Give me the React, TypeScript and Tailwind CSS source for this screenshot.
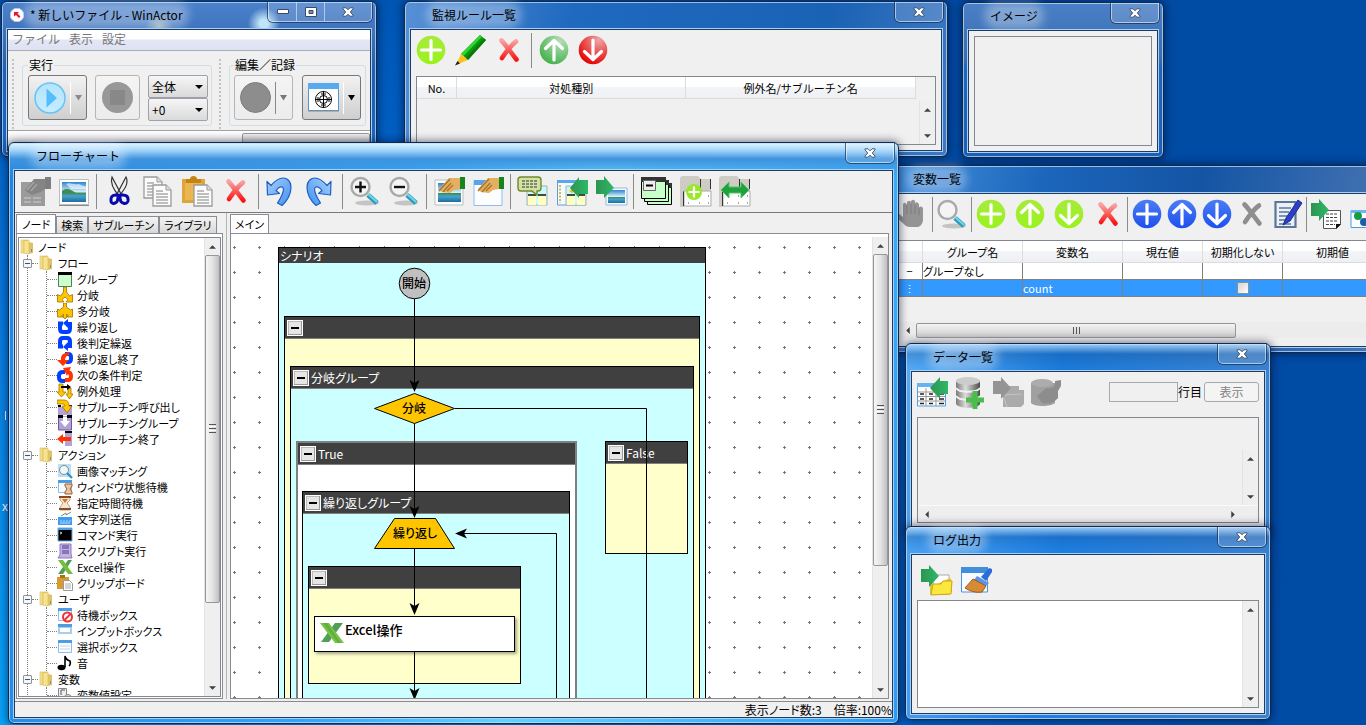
import React from 'react';
import clsx from 'clsx';

type Box = { children: React.ReactNode };

const Pic = ({ children }: Box) => (
  <svg width="30" height="30" viewBox="0 0 30 30" fill="none" aria-hidden="true">{children}</svg>
);

const Mini = ({ children }: Box) => (
  <svg width="16" height="16" viewBox="0 0 16 16" fill="none" className="shrink-0" aria-hidden="true">{children}</svg>
);

/* ---------- shared gradients ---------- */

const Gradients = () => (
  <svg className="absolute size-0" aria-hidden="true">
    <defs>
      <linearGradient id="gRed" x1="0" y1="0" x2="0" y2="1"><stop offset="0" stopColor="#f9a3a3" /><stop offset="1" stopColor="#fa1414" /></linearGradient>
      <radialGradient id="gGreen" cx=".7" cy=".2" r=".9"><stop offset="0" stopColor="#b5dfb8" /><stop offset="1" stopColor="#3fae46" /></radialGradient>
      <radialGradient id="gRedBall" cx=".7" cy=".15" r=".9"><stop offset="0" stopColor="#eda7a7" /><stop offset="1" stopColor="#e60000" /></radialGradient>
      <linearGradient id="gLime" x1="0" y1="0" x2="0" y2="1"><stop offset="0" stopColor="#a8ea3c" /><stop offset="1" stopColor="#98f31c" /></linearGradient>
      <linearGradient id="gBlue" x1="0" y1="0" x2="0" y2="1"><stop offset="0" stopColor="#4b7df5" /><stop offset="1" stopColor="#1d50ee" /></linearGradient>
      <linearGradient id="gArrow" x1="0" y1="0" x2="1" y2="0"><stop offset="0" stopColor="#2b9552" /><stop offset="1" stopColor="#2fb869" /></linearGradient>
      <linearGradient id="gSky" x1="0" y1="0" x2="0" y2="1"><stop offset="0" stopColor="#2d86d3" /><stop offset=".5" stopColor="#d8f0f5" /><stop offset=".55" stopColor="#3f8a62" /><stop offset=".7" stopColor="#48a4c4" /><stop offset="1" stopColor="#1b6ca8" /></linearGradient>
      <linearGradient id="gUndo" x1="0" y1="0" x2="1" y2="1"><stop offset="0" stopColor="#a8d0fb" /><stop offset="1" stopColor="#3f8ff0" /></linearGradient>
      <linearGradient id="gDb" x1="0" y1="0" x2="1" y2="0"><stop offset="0" stopColor="#7a7a7a" /><stop offset=".4" stopColor="#dcdcdc" /><stop offset="1" stopColor="#4c4c4c" /></linearGradient>
      <linearGradient id="gFolder" x1="0" y1="0" x2="1" y2="0"><stop offset="0" stopColor="#f8e596" /><stop offset="1" stopColor="#dcb852" /></linearGradient>
      <linearGradient id="gPlay" x1="0" y1="0" x2="0" y2="1"><stop offset="0" stopColor="#b4e4fb" /><stop offset="1" stopColor="#c6ecff" /></linearGradient>
      <pattern id="gridDots" x="1" y="12" width="25" height="25" patternUnits="userSpaceOnUse"><path d="M1 1h3v1H1zM2 0h1v3H2z" fill="#777" /></pattern>
    </defs>
  </svg>
);

/* ---------- toolbar icons ---------- */

const shapes = {
  plus: 'M15 5.5v19M5.5 15h19',
  up: 'M15 25V6M6.5 13.500L15 5.500l8.500 8',
  down: 'M15 5v19M6.500 16.500L15 24.500l8.500-8',
};

const Ball = ({ fill, shape }: { fill: string; shape: keyof typeof shapes }) => (
  <Pic>
    <circle cx="15" cy="15" r="14.300" fill={fill} />
    <path d={shapes[shape]} stroke="#fff" strokeWidth="3.200" strokeLinecap="round" strokeLinejoin="round" />
  </Pic>
);

const Cross = ({ color = 'url(#gRed)' }) => (
  <Pic>
    <path d="M7.500 5.500C11 9 16 16 22.500 24.500M22 6.500C17 10 12 17 8 23" stroke={color} strokeWidth="4.600" strokeLinecap="round" />
  </Pic>
);

const Pencil = () => (
  <Pic>
    <path d="M25 0l6 5-18 20-7-6z" fill="#0a9a0a" />
    <path d="M25 0l2 1.700L8.500 21 6 19z" fill="#32d332" />
    <path d="M29 3.500l2 1.500-18 20-2.500-2z" fill="#0a7a0a" />
    <path d="M6 19l7 6-12 5z" fill="#ffc21c" />
    <path d="M2.500 26l2.500 2.500L0 30.500z" fill="#222" />
  </Pic>
);

const Properties = () => (
  <Pic>
    <path d="M1 6h24v24H1z" fill="#9b9b9b" />
    <path d="M5 14l9-11h17v9l-6 1-4 3-9 3-5-3z" fill="#858585" />
    <path d="M25 1h6v12h-6z" fill="#7e7e7e" />
    <path d="M7 14l7-8M11 15l6-7" stroke="#a8a8a8" strokeWidth="1.200" />
    <path d="M4 22h7m2 0h8M4 26h7m2 0h8" stroke="#bdbdbd" strokeWidth="1.500" />
  </Pic>
);

const Landscape = () => (
  <Pic>
    <path d="M.5 3.500h29v25H.5z" fill="#fff" stroke="#b9bec2" />
    <path d="M3 6h24v20H3z" fill="url(#gSky)" />
    <path d="M3 15c5-4 9-1 14 2H3z" fill="#3d8c50" />
    <path d="M7 8c4-2 7 1 12 0 3 0 4 3 8 2v3H12z" fill="#fff" opacity=".6" />
    <path d="M0 29.500h30" stroke="#8b8b8b" />
  </Pic>
);

const Scissors = () => (
  <Pic>
    <path d="M8 1l9 17-2 2C9 13 6 7 8 1zM22 1l-9 17 2 2C21 13 25 7 22 1z" fill="#eee" stroke="#333" strokeWidth="1.200" />
    <path d="M14 18c-1 2-8-1-7 7 0 4 7 3 7-3zM16 18c1 2 9-1 8 7-1 4-8 3-8-3z" stroke="#0808ae" strokeWidth="3" />
  </Pic>
);

const Sheet = () => (
  <>
    <path d="M0 0h13l5 5v16H0z" fill="#fbfbfb" stroke="#9b9b9b" strokeWidth="1.300" />
    <path d="M13 0v5h5" fill="#ddd" stroke="#9b9b9b" />
    <path d="M3 6h7M3 9h12M3 12h12M3 15h12M3 18h12" stroke="#aaa" strokeWidth="1.300" />
  </>
);

const Copy = () => (
  <Pic>
    <g transform="translate(1 1)"><Sheet /></g>
    <g transform="translate(10 9)"><Sheet /></g>
  </Pic>
);

const Paste = () => (
  <Pic>
    <path d="M0 3h23v24H0z" fill="#dca63a" />
    <path d="M4 7h15V3h-4c0-4-7-4-7 0H4z" fill="#c58411" />
    <path d="M3 7h17v17H3z" fill="#e9b653" />
    <g transform="translate(12 9)"><Sheet /></g>
  </Pic>
);

const Undo = ({ flip = false }) => (
  <Pic>
    <path
      d="M1 5.500L1.500 19l12-1.500-3.500-3c3-4 7-5 7.500-1.500 0 5-3.500 10-6 14l4.500 2.500C22 24 25 17 25 11c0-6-4-9-8-9-5 0-8.500 3.500-12 7.500z"
      fill="url(#gUndo)" stroke="#1d5fc4" strokeWidth="1.200" strokeLinejoin="round"
      transform={flip ? 'translate(27 0) scale(-1 1)' : undefined}
    />
  </Pic>
);

const Lens = ({ d = '' }) => (
  <Pic>
    <ellipse cx="17" cy="27" rx="12" ry="2.500" fill="#c4c4c4" />
    <path d="M18 19l9 8" stroke="#2a9bbd" strokeWidth="5" />
    <path d="M18 18l9 8" stroke="#79d4ea" strokeWidth="2" />
    <circle cx="10.500" cy="11" r="9" fill="#f4f4f4" stroke="#a9a9a9" strokeWidth="2.400" />
    <path d={d} stroke="#111" strokeWidth="2.400" />
  </Pic>
);

const Hand = () => (
  <>
    <path d="M5 13L15 2h11v11l-6 1-4 3-8-1z" fill="#e3b062" />
    <path d="M5 15L16 3M9 16l8-9M13 15l6-6" stroke="#a8732a" strokeWidth="1.300" />
    <path d="M26 1h5v12h-5z" fill="#16851e" />
  </>
);

const PickImage = () => (
  <Pic>
    <path d="M1 4h28v25H1z" fill="#fff" stroke="#b9bec2" />
    <path d="M4 7h23v19H4z" fill="url(#gSky)" />
    <Hand />
  </Pic>
);

const PickWindow = () => (
  <Pic>
    <path d="M1 4.500h28v25H1z" fill="#fbfdff" stroke="#93bce6" />
    <path d="M1 4h28v5H1z" fill="#58a3ea" />
    <Hand />
  </Pic>
);

const Nodes = () => (
  <>
    <path d="M9 10h20v19H9z" fill="#c5fbfb" stroke="#a7b0b0" />
    <path d="M10 19h8v10h-8zM20 19h8v10h-8z" fill="#ffffc4" />
    <path d="M10 19h8m2 0h8" stroke="#111" strokeWidth="1.600" />
    <path d="M12 15l3-2 3 2-3 2z" fill="#ffb800" />
  </>
);

const Comment = () => (
  <Pic>
    <Nodes />
    <path d="M3 1h17q3 0 3 3v8q0 3-3 3h-1v4l-5-4H3q-3 0-3-3V4q0-3 3-3z" fill="#d3e0a6" stroke="#6f8b2b" strokeWidth="1.400" />
    <path d="M4 5h15M4 8h15M4 11h15" stroke="#333" strokeDasharray="3 1" />
  </Pic>
);

const FlowIn = () => (
  <Pic>
    <path d="M.5 5h28v24H.5z" fill="#f5faff" stroke="#5b9de0" />
    <path d="M0 4h29v3H0z" fill="#5ba7ef" />
    <path d="M3 9v18" stroke="#d6b94a" strokeDasharray="2 1.500" strokeWidth="2" />
    <Nodes />
    <path d="M31 4v14H22v4L13 12l9-11v3z" fill="url(#gArrow)" />
  </Pic>
);

const ImageOut = () => (
  <Pic>
    <path d="M10 12h21v17H10z" fill="#fff" stroke="#8cb9e8" />
    <path d="M12 14h17v13H12z" fill="url(#gSky)" />
    <path d="M0 4v14h8v4l10-10L8 0v4z" fill="url(#gArrow)" />
  </Pic>
);

const GroupStack = () => (
  <Pic>
    <path d="M6.500 7.500h24v21h-24z" fill="#c8ffc8" stroke="#000" />
    <path d="M3.500 5.500h24v20h-24z" fill="#c8ffc8" stroke="#000" />
    <path d="M.5 2.500h24v20H.5z" fill="#c8ffc8" stroke="#000" />
    <path d="M0 1h25v5H0zM25 4h3v5h-3zM28 7h3v5h-3z" fill="#333" />
    <path d="M2.500 4.500h12v10h-12z" fill="#eee" stroke="#666" />
    <path d="M5 9.500h7" stroke="#000" strokeWidth="2" />
  </Pic>
);

const TabSheet = () => (
  <>
    <path d="M0 3q0-3 3-3h15l3 3h10v12H4v16H0z" fill="#cfccc4" />
    <path d="M4 15h27v15H4z" fill="#fff" stroke="#aaa" />
    <path d="M3.500 30V15.500M20.500 12V3M30.500 13V3" stroke="#333" />
    <path d="M8 20h1m10 0h1m8 0h1M8 27h1m10 0h1m8 0h1" stroke="#888" strokeWidth="1.500" />
  </>
);

const TabAdd = () => (
  <Pic>
    <TabSheet />
    <circle cx="14" cy="16" r="8" fill="#98e82c" />
    <path d="M14 10.500v11M8.500 16h11" stroke="#fff" strokeWidth="2.200" />
  </Pic>
);

const TabSwap = () => (
  <Pic>
    <TabSheet />
    <path d="M2 14l8-8v5h12V6l8 8-8 8v-5H10v5z" fill="#1fa23c" stroke="#53c46c" />
  </Pic>
);

const Palm = () => (
  <Pic>
    <path d="M8 27L-3 17c-2-2 1-4 3-3l5 4V6c0-3 3-3 4 0V4c0-3 4-3 4 0V3c0-3 4-3 4 0v2c0-3 4-2 4 1v3c0-2 4-2 4 1v11c0 3-2 6-5 7H11z" fill="#949494" />
    <path d="M9 6v9m4-10v10m4-9v9m4-6v7" stroke="#7c7c7c" />
  </Pic>
);

const Note = () => (
  <Pic>
    <path d="M3.500 3h20v25h-20z" fill="#eaf0f7" stroke="#5c7696" strokeWidth="2.200" />
    <path d="M7 9h12M7 13h10M7 17h8M7 21h12M7 25h12" stroke="#5c7696" strokeWidth="1.400" />
    <path d="M26 1l4 3-12 18-7 4 3-7z" fill="#2c3fc9" stroke="#20298a" />
  </Pic>
);

const ListOut = () => (
  <Pic>
    <path d="M12.500 11.500h17v14l-4 4h-13z" fill="#fff" stroke="#555" />
    <path d="M15 15h12M15 18.500h12M15 22h12M15 25.500h9" stroke="#444" strokeDasharray="3 1" />
    <path d="M25 30v-5h5z" fill="#111" />
    <path d="M0 4v13h8v5l10-11L8 0v4z" fill="url(#gArrow)" />
  </Pic>
);

const VarWindow = () => (
  <Pic>
    <path d="M1 11.500h28v17H1z" fill="#fff" stroke="#4a9be0" />
    <path d="M1 11h28v3H1z" fill="#6db5ef" />
    <circle cx="8" cy="17" r="4" fill="#199b46" />
    <circle cx="14" cy="23" r="4" fill="#1c5fa8" />
  </Pic>
);

const GridIn = () => (
  <Pic>
    <path d="M.5 7h28v22H.5z" fill="#fff" stroke="#4ba0e8" />
    <path d="M0 6h29v4H0z" fill="#64b3f2" />
    <path d="M1 15h27M1 19.500h27M1 24h27M9 11v18M19 11v18" stroke="#999" />
    <path d="M3 17h4M3 22h4M3 26.500h4M12 17h4m-4 5h4m-4 4.500h4M22 17h5m-5 5h5m-5 4.500h5" stroke="#222" strokeWidth="1.500" />
    <path d="M31 4v13H23v5L13 11l10-11v4z" fill="url(#gArrow)" />
  </Pic>
);

const Database = () => (
  <Pic>
    <path d="M1 4v23c3 5 21 5 24 0V4z" fill="url(#gDb)" />
    <ellipse cx="13" cy="4" rx="12" ry="4" fill="#ccc" />
    <path d="M1 11c3 5 21 5 24 0M1 19c3 5 21 5 24 0" stroke="#f0f0f0" strokeWidth="2" />
    <path d="M20 14v18M11 23h18" stroke="#46c046" strokeWidth="5" />
  </Pic>
);

const FoldersOff = () => (
  <Pic>
    <path d="M10 30V13l3-4h13v4h5v14l-3 3z" fill="#ababab" />
    <path d="M11 18l18-1M14 30l-3-9" stroke="#c4c4c4" />
    <path d="M0 4v13h8v5l10-11L8 0v4z" fill="#949494" />
  </Pic>
);

const DatabaseOff = () => (
  <Pic>
    <path d="M0 6v20c3 4 20 4 24 0V6z" fill="#a0a0a0" />
    <ellipse cx="11" cy="6" rx="11" ry="4" fill="#acacac" />
    <path d="M24 4l6-1v6l-3 5v7c-4 5-11 7-16 5l-5-7 9-8c4 1 7 0 9-3z" fill="#8d8d8d" />
  </Pic>
);

const FolderOut = () => (
  <Pic>
    <path d="M12 10h16v12H12z" fill="#fff" stroke="#aaa" />
    <path d="M9 30V13h3v8l17-8 2 3v11l-4 3z" fill="#e6c430" />
    <path d="M10 30l2-11h8l2-3h9l-1 13z" fill="#fbe83c" stroke="#cda41c" />
    <path d="M0 4v13h8v5l10-11L8 0v4z" fill="url(#gArrow)" />
  </Pic>
);

const ClearLog = () => (
  <Pic>
    <path d="M.5 3h26v24H.5z" fill="#f8fbff" stroke="#4f94d8" />
    <path d="M0 2h27v6H0z" fill="#3f8fdd" />
    <path d="M20 12l8-9 3 1v3l-6 9z" fill="#2a6fd8" />
    <path d="M16 11l12 7-3 3-12-6z" fill="#5a93e8" />
    <path d="M12 14l13 7-4 6c-7 1-12-1-17-4z" fill="#d98a34" stroke="#9c5a17" />
  </Pic>
);

/* ---------- tree icons ---------- */

const Folder = () => (
  <svg width="14" height="16" viewBox="0 0 14 16" className="shrink-0" aria-hidden="true">
    <path d="M1 1h7v13H1z" fill="url(#gFolder)" stroke="#d9bd66" strokeWidth=".6" />
    <path d="M4 2l5-1v14l-5-1z" fill="#f7e38f" stroke="#d9b95a" strokeWidth=".6" />
    <path d="M9 3l4 1v10l-4 1z" fill="#e3c163" />
    <path d="M11.500 10v3" stroke="#4aa0e0" />
  </svg>
);

const WindowBase = () => (
  <>
    <path d="M1.500 1.500h13v12h-13z" fill="#f7fbff" stroke="#8fbfea" />
    <path d="M1 1h14v3H1z" fill="#4c9de2" />
  </>
);

const nodeIcons: Record<string, React.ReactNode> = {
  group: <Mini><path d="M1.500 2.500h13v13h-13z" fill="#ccffcc" stroke="#4c8055" /><path d="M1 1h14v3H1z" fill="#000" /></Mini>,
  branch: <Mini><path d="M6.500 0h3v5l3 4 3-1.500V15H9l2-2.500L8 10l-3 2.500L7 15H.5V7.500l3 1.500 3-4z" fill="#ffc600" stroke="#a07400" strokeWidth=".8" /></Mini>,
  multi: <Mini><path d="M6.500 0h3v4l4 3 2-1v8h-6l2-1-2-2v2h1.500L8 16l-3-3h1.500v-2l-2 2 2 1h-6V6l2 1 4-3z" fill="#ffc600" stroke="#a07400" strokeWidth=".8" /></Mini>,
  loop: <Mini><path d="M6 4.500H3v5Q3 13 6 13h4q3 0 3-3.500V5h-3" stroke="#0040ff" strokeWidth="4" /><path d="M11 0L6 4l5 5z" fill="#0040ff" /></Mini>,
  loopAfter: <Mini><path d="M6 11.500H3v-5Q3 3 6 3h4q3 0 3 3.500V11h-3" stroke="#0040ff" strokeWidth="4" /><path d="M11 7l-5 5 5 4z" fill="#0040ff" /></Mini>,
  loopEnd: <Mini><path d="M8 3h3q3 0 3 3v2q0 3-3 3h-2" stroke="#0040ff" strokeWidth="4" /><path d="M12 1q-9 1-8 8H0l6 6 6-6H8q0-4 4-5z" fill="#ff3200" /></Mini>,
  next: <Mini><path d="M8 5H6Q2 5 2 8.500v2Q2 14 6 14h2" stroke="#0040ff" strokeWidth="4" /><path d="M8 13h3q3 0 3-4 0-4-4-4" stroke="#ff3200" strokeWidth="4" /><path d="M14 0L6 1l4 8z" fill="#ff3200" /></Mini>,
  exception: <Mini><path d="M2 1h4v8h3l-4.500 5L0 9h2zM11 5h3v6h2l-3.500 5L9 11h2z" fill="#ffc600" stroke="#a07400" strokeWidth=".8" /><path d="M4 3h6V1l4 3-4 3V5H4z" fill="#000" /></Mini>,
  call: <Mini><path d="M1 8h14v8H1z" fill="#b3a2d8" /><path d="M1 6h3v2H1zm11 0h3v2h-3z" fill="#000" /><path d="M0 1h7q5 0 5 6h3l-5 7-5-7h3q0-2-2-2H0z" fill="#ffc600" stroke="#a07400" strokeWidth=".8" /></Mini>,
  subGroup: <Mini><path d="M1.500 2h13v13h-13z" fill="#b3a2d8" stroke="#6c5aa0" /><path d="M1 0h5v3H1zm9 0h5v3h-5z" fill="#000" /><path d="M6 2h4v4h3l-5 6-5-6h3z" fill="#fff" /></Mini>,
  subEnd: <Mini><path d="M8 2h7v13H8z" fill="#b3a2d8" /><path d="M8 0h7v2H8z" fill="#000" /><path d="M0 8l6-5v3h8v4H6v3z" fill="#ff3200" /></Mini>,
  match: <Mini><path d="M1 1h13v13H1z" fill="#bcdff5" /><circle cx="7" cy="7" r="4.500" fill="#eef8fc" stroke="#888" /><path d="M10 10l5 5" stroke="#2a9bbd" strokeWidth="2.400" /></Mini>,
  winWait: <Mini><WindowBase /><path d="M8 5h7v2l-2 3 2 3v2H8v-2l2-3-2-3z" fill="#e8c8a4" stroke="#9a5a2a" /></Mini>,
  wait: <Mini><path d="M3 2h10v3l-3 3 3 4v3H3v-3l3-4-3-3z" fill="#f6e6d0" stroke="#c9a37c" /><path d="M2 1h12v2H2zm0 12h12v2H2z" fill="#8b4b22" /><path d="M5 4h6L8 8z" fill="#c57a35" /></Mini>,
  send: <Mini><path d="M1 6h14v8H1z" fill="#3d9cf0" /><path d="M3 10h2m1 0h2m1 0h2m1 0h2M3 12h10" stroke="#b8dcff" /><path d="M4 5l5-3v2l5-3" stroke="#888" /></Mini>,
  command: <Mini><path d="M1 1h14v13H1z" fill="#000" stroke="#7aa7d8" /><path d="M1 1h14v2H1z" fill="#4c9de2" /><path d="M3 5l2 1-2 1" stroke="#ccc" /></Mini>,
  script: <Mini><path d="M3 1h11v10l1 4H1l2-3z" fill="#c3b2e6" stroke="#8f79c3" /><path d="M5 3h7M5 5h7M5 8h7M5 10h7" stroke="#4b3a80" /></Mini>,
  excel: <Mini><path d="M11 1h4L6 15H1z" fill="#4f9f52" /><path d="M1 1h5l10 14h-5z" fill="#74bf3e" /></Mini>,
  clip: <Mini><path d="M0 2h12v12H0z" fill="#d79b30" /><path d="M3 0h5v3H3z" fill="#a87417" /><path d="M6.500 5.500h6l3 3v7h-9z" fill="#fff" stroke="#999" /><path d="M8 9h6m-6 2h6m-6 2h6" stroke="#aaa" /></Mini>,
  waitBox: <Mini><WindowBase /><circle cx="10.500" cy="10" r="4.500" fill="#fff" stroke="#e33" strokeWidth="2" /><path d="M7.500 13l6-6" stroke="#e33" strokeWidth="2" /></Mini>,
  inputBox: <Mini><path d="M1 1h14v10H1z" fill="#a9cfee" /><path d="M1 1h14v3H1z" fill="#4c9de2" /><path d="M3 5h10v4H3z" fill="#fff" /></Mini>,
  selectBox: <Mini><WindowBase /><path d="M3 7h10M3 10h10" stroke="#c9d7e4" /></Mini>,
  sound: <Mini><ellipse cx="4.500" cy="12.500" rx="4" ry="2.800" fill="#000" /><path d="M8 12V1q1 4 5 5 1 3-1 5" stroke="#000" strokeWidth="1.600" /></Mini>,
  setVar: <Mini><path d="M1.500 1.500h8v8h-8z" fill="#eee" stroke="#888" /><path d="M4 8V3h4" stroke="#555" /><circle cx="11" cy="11" r="3.500" fill="#ddd" stroke="#888" /></Mini>,
};

const tree = [
  {
    name: 'フロー',
    nodes: [
      ['group', 'グループ'], ['branch', '分岐'], ['multi', '多分岐'], ['loop', '繰り返し'], ['loopAfter', '後判定繰返'],
      ['loopEnd', '繰り返し終了'], ['next', '次の条件判定'], ['exception', '例外処理'], ['call', 'サブルーチン呼び出し'],
      ['subGroup', 'サブルーチングループ'], ['subEnd', 'サブルーチン終了'],
    ],
  },
  {
    name: 'アクション',
    nodes: [
      ['match', '画像マッチング'], ['winWait', 'ウィンドウ状態待機'], ['wait', '指定時間待機'], ['send', '文字列送信'],
      ['command', 'コマンド実行'], ['script', 'スクリプト実行'], ['excel', 'Excel操作'], ['clip', 'クリップボード'],
    ],
  },
  {
    name: 'ユーザ',
    nodes: [['waitBox', '待機ボックス'], ['inputBox', 'インプットボックス'], ['selectBox', '選択ボックス'], ['sound', '音']],
  },
  { name: '変数', nodes: [['setVar', '変数値設定']] },
];

/* ---------- window chrome ---------- */

const CloseGlyph = () => (
  <svg width="12" height="10" viewBox="0 0 12 10" aria-hidden="true">
    <path d="M1 .8h3l2 2 2-2h3v1L8.300 5 11 8.200v1H8l-2-2-2 2H1v-1L3.700 5 1 1.800z" fill="#fff" stroke="#3a4a63" strokeWidth=".9" />
  </svg>
);

const capButton = 'h-[19px] flex items-center justify-center bg-white/15';

type WinProps = { title: string; place: string; frame: string; full?: boolean; children: React.ReactNode };

const Win = ({ title, place, frame, full, children }: WinProps) => (
  <section
    className={clsx(
      'absolute flex flex-col rounded-md border border-[#12294c] px-1 pb-1 shadow-[inset_0_0_0_1px_rgba(190,222,250,.75),0_0_8px_1px_rgba(0,10,40,.55)]',
      place,
      frame,
    )}
  >
    <header className="flex h-[26px] shrink-0 items-start">
      <div className={clsx('flex h-[26px] items-center', full ? 'pl-1' : 'pl-[23px]')}>
        {full && (
          <svg width="14" height="14" viewBox="0 0 14 14" className="mr-[6px]" aria-hidden="true">
            <circle cx="7" cy="7" r="6.800" fill="#fff" stroke="#c9c3dc" />
            <path d="M4 4h5L7.500 5.500l3 3-1.500 1.500-3-3L4 8.500z" fill="#e8142c" />
          </svg>
        )}
        <h2 className="rounded-full bg-white/30 leading-4 whitespace-pre text-black shadow-[0_0_8px_6px_rgba(255,255,255,.3)] [font-feature-settings:normal]">{title}</h2>
      </div>
      <div className="ml-auto flex overflow-hidden rounded-b-[5px] border border-t-0 border-white/60 shadow-[0_0_0_1px_rgba(20,45,85,.7)]">
        {full && (
          <>
            <button aria-label="最小化" className={clsx(capButton, 'w-7 border-r border-white/50')}>
              <svg width="12" height="5" viewBox="0 0 12 5"><path d="M.5.5h11v4H.5z" fill="#fff" stroke="#3a4a63" /></svg>
            </button>
            <button aria-label="最大化" className={clsx(capButton, 'w-7 border-r border-white/50')}>
              <svg width="12" height="10" viewBox="0 0 12 10"><path d="M.5.500h11v9H.5zM4 3.500h4v3H4z" fill="#fff" fillRule="evenodd" stroke="#3a4a63" /></svg>
            </button>
          </>
        )}
        <button aria-label="閉じる" className={clsx(capButton, 'w-[46px]')}><CloseGlyph /></button>
      </div>
    </header>
    <div className="flex min-h-0 flex-1 border border-[#a9d0f2]">
      <div className="flex min-h-0 min-w-0 flex-1 flex-col overflow-hidden border border-[#1c3c66] bg-[#f0f0f0]">{children}</div>
    </div>
  </section>
);

const Sep = ({ tight = false }) => <div className={clsx('h-[35px] w-px shrink-0 bg-[#8a8a8a]', tight ? 'mx-1' : 'mx-[7px]')} />;

type Tool = [string, React.ReactNode];

const Tools = ({ items, gap = 'gap-[9px]' }: { items: Tool[]; gap?: string }) => (
  <div className={clsx('flex shrink-0', gap)}>
    {items.map(([label, icon]) => (
      <button key={label} aria-label={label} className="size-[30px] shrink-0 [&>svg]:overflow-visible">{icon}</button>
    ))}
  </div>
);

/* ---------- scroll bars ---------- */

const arrowPaths = { up: 'M4 0l4 4H0z', down: 'M0 0h8L4 4z', left: 'M4 0v8L0 4z', right: 'M0 0l4 4-4 4z' };

const ScrollArrow = ({ dir }: { dir: keyof typeof arrowPaths }) => {
  const flat = dir === 'up' || dir === 'down';
  return (
    <button aria-label={dir} className="flex size-[17px] shrink-0 items-center justify-center">
      <svg width={flat ? 7 : 4} height={flat ? 4 : 7} viewBox={flat ? '0 0 8 4' : '0 0 4 8'}><path d={arrowPaths[dir]} fill="#404040" /></svg>
    </button>
  );
};

const VScroll = ({ thumb }: { thumb?: string }) => (
  <div className="flex w-4 shrink-0 flex-col items-center border-l border-[#e3e3e3] bg-[#efefef]">
    <ScrollArrow dir="up" />
    <div className="min-h-0 w-full flex-1">
      {thumb && (
        <div className={clsx('flex w-[15px] flex-col items-center justify-center gap-px rounded-xs border border-[#979797] bg-linear-to-r from-[#f6f6f6] via-[#e4e4e4] to-[#c0c0c4]', thumb)}>
          <i className="h-px w-[7px] bg-[#555]" /><i className="h-px w-[7px] bg-white" /><i className="h-px w-[7px] bg-[#555]" /><i className="h-px w-[7px] bg-white" /><i className="h-px w-[7px] bg-[#555]" />
        </div>
      )}
    </div>
    <ScrollArrow dir="down" />
  </div>
);

/* ---------- windows ---------- */

const SplitArrow = ({ color }: { color: string }) => (
  <svg width="7" height="6" viewBox="0 0 7 6" aria-hidden="true"><path d="M0 0h7L3.500 5.500z" fill={color} /></svg>
);

const bigButton = 'flex h-[45px] shrink-0 items-center justify-center rounded-[3px] border bg-linear-to-b';

const Grip = () => <div className="mt-2 h-[70px] w-0 border-l-2 border-dotted border-[#c2c2c2]" />;

const Choice = ({ label, value }: { label: string; value: string }) => (
  <div className="relative">
    <select aria-label={label} className="block h-[23px] w-[60px] appearance-none rounded-[2px] border border-[#a0a0a8] bg-linear-to-b from-[#f6f6f6] to-[#dadada] pl-[3px] leading-4">
      <option>{value}</option>
    </select>
    <svg width="8" height="4" viewBox="0 0 8 4" className="pointer-events-none absolute top-[10px] right-[5px]"><path d="M0 0h8L4 4z" fill="#000" /></svg>
  </div>
);

const MainWindow = () => (
  <Win title="* 新しいファイル - WinActor" full place="left-px top-px h-[156px] w-[376px]" frame="bg-[radial-gradient(circle_at_42%_16%,rgba(220,225,190,.55)_0,transparent_14px),radial-gradient(circle_at_70%_14%,rgba(205,240,255,.9)_4px,transparent_16px),linear-gradient(180deg,#4c82cc_0%,#2f62ac_38%,#1f5fb4_45%,#1a67c2_100%)]">
    <nav className="flex h-[21px] shrink-0 items-center gap-[9px] border-b border-[#a9adb8] bg-linear-to-b from-white from-45% via-[#e3e7f5] via-50% to-[#dde2f2] pb-[3px] pl-1 text-[#777]">
      <a href="#file">ファイル</a>
      <a href="#view">表示</a>
      <a href="#settings">設定</a>
    </nav>
    <div className="flex h-20 shrink-0 border-b border-[#a0a0a0] bg-[#f0f0f0] pl-1">
      <Grip />
      <fieldset className="mt-[7px] ml-2 flex h-[68px] rounded-[3px] border border-[#d3dde6] pt-[3px] pr-[3px] pl-[5px]">
        <legend className="px-px leading-[14px]">実行</legend>
        <div className="flex gap-2">
          <button aria-label="実行" className={clsx(bigButton, 'w-[59px] border-[#777] from-[#f2f2f2] to-[#cfcfcf]')}>
            <svg width="32" height="32" viewBox="0 0 32 32"><circle cx="16" cy="16" r="15" fill="url(#gPlay)" stroke="#66c3f5" strokeWidth="1.500" /><path d="M12.500 6.500L23 16l-10.500 9.500z" fill="#54bdfb" /></svg>
            <i className="mx-1 h-8 w-px bg-white" />
            <SplitArrow color="#8a8a8a" />
          </button>
          <button aria-label="停止" className={clsx(bigButton, 'w-[45px] border-[#b5b5b5] from-[#f4f4f4] to-[#ececec]')}>
            <svg width="31" height="31" viewBox="0 0 31 31"><circle cx="15.500" cy="15.500" r="15.500" fill="#989898" /><path d="M8 8h15v15H8z" fill="#888" /></svg>
          </button>
          <div><Choice label="範囲" value="全体" /><Choice label="速度" value="+0" /></div>
        </div>
      </fieldset>
      <div className="ml-[7px]"><Grip /></div>
      <fieldset className="mt-[7px] ml-2 flex h-[68px] rounded-[3px] border border-[#d3dde6] pt-[3px] pr-1 pl-1">
        <legend className="px-px leading-[14px]">編集／記録</legend>
        <div className="flex gap-[9px]">
          <button aria-label="記録" className={clsx(bigButton, 'w-[59px] border-[#b5b5b5] from-[#f4f4f4] to-[#ececec]')}>
            <svg width="31" height="31" viewBox="0 0 31 31"><circle cx="15.500" cy="15.500" r="15" fill="#8d8d8d" stroke="#7c7c7c" /></svg>
            <i className="mx-1 h-8 w-px bg-[#888]" />
            <SplitArrow color="#777" />
          </button>
          <button aria-label="ターゲット選択" className={clsx(bigButton, 'w-[59px] border-[#777] from-[#f2f2f2] to-[#cfcfcf]')}>
            <svg width="31" height="29" viewBox="0 0 31 29">
              <path d="M.5.500h30v27H.5z" fill="#fff" stroke="#4a97dd" /><path d="M0 0h31v6H0z" fill="#58aaf0" /><path d="M0 28h31" stroke="#888" />
              <circle cx="15.500" cy="16.500" r="8" stroke="#000" fill="none" /><circle cx="15.500" cy="16.500" r="4" stroke="#000" fill="none" />
              <path d="M15.500 8v17M7 16.500h17M13 11h5m-5 11h5M10 14v5m11-5v5" stroke="#000" />
            </svg>
            <i className="mx-1 h-8 w-px bg-white" />
            <SplitArrow color="#000" />
          </button>
        </div>
      </fieldset>
    </div>
    <div className="flex flex-1 justify-end bg-linear-to-b from-white to-[#e4e4e4] pt-[2px]">
      <div className="w-32 rounded-t-xs border border-[#999] bg-linear-to-b from-[#f0f0f0] to-[#aaa]" />
    </div>
  </Win>
);

const th = 'h-[22px] border-r border-b border-[#dcdcdc] bg-linear-to-b from-white from-45% via-[#f3f4f6] via-50% to-[#eff0f3] p-0 text-center font-normal whitespace-nowrap text-[11px]';

const RulesWindow = () => (
  <Win title="監視ルール一覧" place="left-[404px] top-px h-[156px] w-[544px]" frame="bg-[linear-gradient(100deg,#5790d6_0%,#1f69bf_30%,#1a62b4_75%,#3f79c2_100%)]">
    <div className="flex h-10 shrink-0 items-center pl-[5px]">
      <Tools items={[['追加', <Ball fill="url(#gLime)" shape="plus" />], ['編集', <Pencil />], ['削除', <Cross />]]} />
      <Sep />
      <Tools items={[['上へ', <Ball fill="url(#gGreen)" shape="up" />], ['下へ', <Ball fill="url(#gRedBall)" shape="down" />]]} />
    </div>
    <div className="mx-[5px] mt-[6px] mb-[5px] flex flex-1 flex-col border border-[#828790]">
      <div className="pr-[19px]">
        <table className="w-full table-fixed border-separate border-spacing-0">
          <thead>
            <tr>
              <th className={clsx(th, 'w-[8%]')}>No.</th>
              <th className={clsx(th, 'w-[46%]')}>対処種別</th>
              <th className={clsx(th, 'w-[46%]')}>例外名/サブルーチン名</th>
            </tr>
          </thead>
        </table>
      </div>
      <div className="flex min-h-0 flex-1 justify-end pt-[2px]"><VScroll /></div>
    </div>
  </Win>
);

const ImageWindow = () => (
  <Win title="イメージ" place="left-[962px] top-[2px] h-[156px] w-[202px]" frame="bg-[linear-gradient(180deg,#4a80c6_0%,#3a6cb0_36%,#1d66bd_42%,#1a60b6_100%)]">
    <div className="m-[5px] flex-1 border border-[#828790]" />
  </Win>
);

const td = 'h-[17px] border-r border-b border-[#808080] p-0 leading-4 whitespace-nowrap';

const VariablesWindow = () => (
  <Win title="変数一覧" place="left-[885px] right-[-120px] top-[165px] h-[188px]" frame="bg-[linear-gradient(100deg,#4a94e0_0%,#1c66bc_25%,#1454a4_50%,#4c78b4_85%)]">
    <div className="flex h-10 shrink-0 items-center pl-[6px]">
      <Tools items={[['手動', <Palm />]]} />
      <Sep tight />
      <Tools items={[['検索', <Lens />]]} />
      <Sep tight />
      <Tools items={[['グループ追加', <Ball fill="url(#gLime)" shape="plus" />], ['グループ上へ', <Ball fill="url(#gLime)" shape="up" />], ['グループ下へ', <Ball fill="url(#gLime)" shape="down" />], ['グループ削除', <Cross />]]} />
      <Sep tight />
      <Tools gap="gap-[5px]" items={[['変数追加', <Ball fill="url(#gBlue)" shape="plus" />], ['変数上へ', <Ball fill="url(#gBlue)" shape="up" />], ['変数下へ', <Ball fill="url(#gBlue)" shape="down" />], ['変数削除', <Cross color="#8e8e8e" />], ['変数編集', <Note />]]} />
      <Sep tight />
      <Tools items={[['一覧出力', <ListOut />], ['変数画面', <VarWindow />]]} />
    </div>
    <div className="mt-[6px] ml-[5px] flex flex-col border-t border-[#828790]">
      <table className="w-[586px] table-fixed border-separate border-spacing-0 bg-white">
        <thead>
          <tr>
            <th className={clsx(th, 'w-[26px]')} />
            <th className={clsx(th, 'w-[100px]')}>グループ名</th>
            <th className={clsx(th, 'w-[100px]')}>変数名</th>
            <th className={clsx(th, 'w-[80px]')}>現在値</th>
            <th className={clsx(th, 'w-[80px]')}>初期化しない</th>
            <th className={clsx(th, 'w-[100px]')}>初期値</th>
            <th className={clsx(th, 'w-[100px]')} />
          </tr>
        </thead>
        <tbody className="text-[11px]">
          <tr>
            <td className={clsx(td, 'text-center')}>−</td>
            <td className={td}>グループなし</td>
            <td className={td} /><td className={td} /><td className={td} /><td className={td} /><td className={td} />
          </tr>
          <tr className="bg-[#3399ff] text-white">
            <td className={clsx(td, 'text-center')}>⋮</td>
            <td className={td} />
            <td className={td}>count</td>
            <td className={td} />
            <td className={td}>
              <input type="checkbox" aria-label="初期化しない" className="mx-auto block size-3 appearance-none border border-[#8e8f8f] bg-linear-to-br from-[#d0d3d8] to-white" />
            </td>
            <td className={td} /><td className={td} />
          </tr>
        </tbody>
      </table>
      <div className="mt-[25px] flex h-4 items-center bg-[#ececec] pl-[2px]">
        <ScrollArrow dir="left" />
        <div className="flex h-[15px] w-[320px] items-center justify-center gap-[2px] rounded-xs border border-[#979797] bg-linear-to-b from-[#f4f4f4] via-[#e0e0e0] to-[#cacaca]">
          <i className="h-[7px] w-px bg-[#555]" /><i className="h-[7px] w-px bg-[#555]" /><i className="h-[7px] w-px bg-[#555]" />
        </div>
      </div>
    </div>
  </Win>
);

const DataWindow = () => (
  <Win title="データ一覧" place="left-[905px] top-[343px] h-[194px] w-[366px]" frame="bg-[linear-gradient(180deg,rgba(190,225,255,.8)_0,rgba(20,70,130,.25)_10px,transparent_24px),linear-gradient(100deg,#55aaf5_0%,#1a7ada_40%,#3f83cf_100%)]">
    <div className="flex h-10 shrink-0 items-center px-[5px]">
      <Tools gap="gap-[8px]" items={[['データ読込', <GridIn />], ['データ追加', <Database />], ['データ出力', <FoldersOff />], ['データ更新', <DatabaseOff />]]} />
      <div className="ml-auto flex items-center">
        <input id="rowNo" type="text" disabled className="h-5 w-[69px] border border-[#a5a9b0] bg-[#f0f0f0]" />
        <label htmlFor="rowNo">行目</label>
        <button disabled className="ml-[2px] h-5 w-[55px] rounded-[3px] border border-[#a5a9b0] bg-[#f4f4f4] leading-4 text-[#838383]">表示</button>
      </div>
    </div>
    <div className="mx-[5px] mt-[5px] mb-[7px] flex min-h-0 flex-1 flex-col border border-[#828790]">
      <div className="flex min-h-0 flex-1 justify-end pt-8"><VScroll /></div>
      <div className="flex h-[17px] shrink-0 justify-between border-t border-[#fafafa] bg-[#eee] pr-[17px]">
        <ScrollArrow dir="left" />
        <ScrollArrow dir="right" />
      </div>
    </div>
  </Win>
);

const LogWindow = () => (
  <Win title="ログ出力" place="left-[905px] top-[526px] h-[194px] w-[366px]" frame="bg-[linear-gradient(180deg,rgba(190,225,255,.8)_0,rgba(20,70,130,.25)_10px,transparent_24px),linear-gradient(100deg,#48a2f5_0%,#1c7ee2_40%,#3d80cc_100%)]">
    <div className="flex h-[45px] shrink-0 items-center pt-1 pl-[9px]">
      <Tools gap="gap-[10px]" items={[['ログ保存', <FolderOut />], ['ログ消去', <ClearLog />]]} />
    </div>
    <div className="mx-[5px] mb-[5px] flex min-h-0 flex-1 border border-[#828790] bg-white">
      <textarea aria-label="ログ" readOnly className="min-w-0 flex-1 resize-none bg-white outline-none" />
      <VScroll />
    </div>
  </Win>
);

/* ---------- flow chart ---------- */

const Fold = () => (
  <button aria-label="折りたたむ" className="flex size-4 shrink-0 items-center justify-center border border-white bg-[#e6e6e6] shadow-[inset_-1px_-1px_0_#999,inset_1px_1px_0_#bbb]">
    <i className="h-[2px] w-2 bg-black" />
  </button>
);

type GroupProps = { label?: string; at: string; body: string; thick?: boolean };

const Group = ({ label, at, body, thick }: GroupProps) => (
  <div className={clsx('absolute flex flex-col', thick ? 'border-2 border-[#808080]' : 'border border-black', at)}>
    <div className="flex h-[22px] shrink-0 items-center gap-[2px] border-b border-[#808080] bg-[#404040] px-[2px] text-white">
      <Fold />
      <span className="leading-4 whitespace-nowrap">{label}</span>
    </div>
    <div className={clsx('flex-1', body)} />
  </div>
);

const Canvas = () => (
  <div className="relative min-w-0 flex-1 overflow-hidden bg-white">
    <svg className="absolute inset-0 size-full" aria-hidden="true"><rect width="100%" height="100%" fill="url(#gridDots)" /></svg>
    <div className="absolute top-[13px] left-[47px] h-[600px] w-[428px] border border-black bg-[#ccffff]">
      <div className="h-[15px] bg-[#404040] pl-px leading-[15px] text-white">シナリオ</div>
    </div>
    <Group at="left-[53px] top-[82px] h-[520px] w-[416px]" body="bg-[#ffffcc]" />
    <Group label="分岐グループ" at="left-[59px] top-[132px] h-[470px] w-[404px]" body="bg-[#ccffff]" />
    <Group label="True" thick at="left-[65px] top-[207px] h-[400px] w-[281px]" body="bg-white" />
    <Group label="False" at="left-[374px] top-[207px] h-[113px] w-[83px]" body="bg-[#ffffcc]" />
    <Group label="繰り返しグループ" at="left-[71px] top-[257px] h-[350px] w-[268px]" body="bg-[#ccffff]" />
    <Group at="left-[77px] top-[332px] h-[118px] w-[213px]" body="bg-[#ffffcc]" />
    <svg className="absolute top-0 left-0" width="640" height="466" viewBox="0 0 640 466" fill="none" aria-hidden="true">
      <path d="M183.500 64v90M183.500 189v92M183.500 314v66M183.500 418v45M224 174.500h191.500V466M230 299.500h95.500V466" stroke="#000" />
      <path d="M183.500 158l-5-12 5 3 5-3zM183.500 284l-5-12 5 3 5-3zM183.500 381l-5-12 5 3 5-3zM183.500 466l-5-12 5 3 5-3zM224 299.500l12-5-3 5 3 5z" fill="#000" />
      <circle cx="183.500" cy="49.500" r="15.300" fill="#c0c0c0" stroke="#000" />
      <path d="M143.500 174.500l40-15 40 15-40 15zM163.500 284.500h41l19 30h-80z" fill="#ffc600" stroke="#000" />
    </svg>
    <span className="absolute top-[41px] left-[171px] leading-4 font-medium">開始</span>
    <span className="absolute top-[166px] left-[171px] leading-4 font-medium">分岐</span>
    <span className="absolute top-[291px] left-[162px] leading-4 font-medium">繰り返し</span>
    <div className="absolute top-[382px] left-[83px] flex h-[36px] w-[201px] gap-px border border-black bg-white pl-[5px] shadow-[2px_2px_3px_rgba(0,0,0,.35)]">
      <svg width="24" height="22" viewBox="0 0 24 22" className="mt-[5px]" aria-hidden="true">
        <path d="M15 1h8L9 20H1z" fill="#4f9f5a" />
        <path d="M0 1h9l15 20h-9z" fill="#7cc243" />
        <path d="M3 1h4l14 20h-3z" fill="#5faf45" />
      </svg>
      <span className="mt-[5px] text-[13px] leading-4 font-medium">Excel操作</span>
    </div>
  </div>
);

const leftTabs = ['ノード', '検索', 'サブルーチン', 'ライブラリ'];

const NodePanel = () => (
  <div className="flex min-h-0 w-[208px] shrink-0 flex-col pl-px">
    <div role="tablist" className="flex h-5 shrink-0 items-end text-[11px]">
      {leftTabs.map((tab, i) => (
        <button
          key={tab}
          role="tab"
          aria-selected={i === 0}
          className={clsx(
            'border border-b-0 border-[#898c95] leading-4 whitespace-nowrap',
            i === 0 ? 'h-[19px] bg-white px-[5px]' : 'h-[17px] bg-linear-to-b from-[#f4f4f4] to-[#d8d8d8] px-1',
          )}
        >
          {tab}
        </button>
      ))}
    </div>
    <div className="flex min-h-0 flex-1 border border-[#898c95] bg-white px-px pt-[3px] pb-px">
      <div className="flex min-h-0 flex-1 border border-[#828790]">
        <div className="min-w-0 flex-1 overflow-hidden pt-px text-[11px] leading-4 whitespace-nowrap">
          <div className="flex h-4 gap-1 pl-px"><Folder />ノード</div>
          <ul className="ml-2 border-l border-dotted border-[#808080]">
            {tree.map((branch) => (
              <li key={branch.name}>
                <div className="-ml-[5px] flex h-4 items-center">
                  <button aria-label="折りたたむ" className="flex size-[9px] shrink-0 items-center justify-center rounded-[1px] border border-[#8f949b] bg-[#f6f6f6]">
                    <i className="h-px w-[5px] bg-[#3050b0]" />
                  </button>
                  <i className="mr-px w-[6px] border-t border-dotted border-[#808080]" />
                  <Folder />
                  <span className="ml-[5px]">{branch.name}</span>
                </div>
                <ul className="ml-[18px] border-l border-dotted border-[#808080]">
                  {branch.nodes.map(([icon, name]) => (
                    <li key={name} className="flex h-4 items-center">
                      <i className="w-[10px] shrink-0 border-t border-dotted border-[#808080]" />
                      {nodeIcons[icon]}
                      <span className="ml-1">{name}</span>
                    </li>
                  ))}
                </ul>
              </li>
            ))}
          </ul>
        </div>
        <VScroll thumb="h-[82%]" />
      </div>
    </div>
  </div>
);

const FlowWindow = () => (
  <Win title="フローチャート" place="left-2 top-[142px] h-[582px] w-[891px]" frame="bg-[linear-gradient(180deg,#dff6ff_0,#a6d6fb_7px,#3f93dd_16px,rgba(31,125,214,0)_34px),linear-gradient(100deg,#1f86e2_0%,#2ba6ff_40%,#58d6ff_60%,#2c9cf8_100%)]">
    <div className="flex h-[42px] shrink-0 items-center border-b border-[#7a7a7a] pb-px pl-[5px]">
      <Tools items={[['プロパティ', <Properties />], ['画像', <Landscape />]]} />
      <Sep />
      <Tools items={[['切り取り', <Scissors />], ['コピー', <Copy />], ['貼り付け', <Paste />], ['削除', <Cross />]]} />
      <Sep />
      <Tools items={[['元に戻す', <Undo />], ['やり直し', <Undo flip />]]} />
      <Sep />
      <Tools items={[['拡大', <Lens d="M10.500 5.500v11M5 11h11" />], ['縮小', <Lens d="M5 11h11" />]]} />
      <Sep />
      <Tools items={[['画像選択', <PickImage />], ['ウィンドウ選択', <PickWindow />]]} />
      <Sep />
      <Tools items={[['コメント', <Comment />], ['フロー読込', <FlowIn />], ['画像出力', <ImageOut />]]} />
      <Sep />
      <Tools items={[['グループ折りたたみ', <GroupStack />], ['タブ追加', <TabAdd />], ['タブ移動', <TabSwap />]]} />
    </div>
    <div className="flex min-h-0 flex-1 pb-[2px]">
      <NodePanel />
      <div className="mx-[3px] w-px bg-[#b4b4b4]" />
      <div className="flex min-h-0 min-w-0 flex-1 flex-col pr-[3px]">
        <div role="tablist" className="flex h-5 shrink-0 items-end text-[11px]">
          <button role="tab" aria-selected="true" className="h-[19px] w-[39px] border border-b-0 border-[#898c95] bg-white leading-4">メイン</button>
        </div>
        <div className="flex min-h-0 flex-1 border border-[#898c95] bg-white">
          <Canvas />
          <div className="flex pt-[3px]"><VScroll thumb="h-[73%]" /></div>
        </div>
      </div>
    </div>
    <footer className="flex h-4 shrink-0 justify-end gap-3 border-t border-[#8a8a8a] leading-4">
      <span>表示ノード数:3</span>
      <span>倍率:100%</span>
    </footer>
  </Win>
);

const App = () => (
  <main lang="ja" className="relative h-screen w-full overflow-hidden bg-[radial-gradient(ellipse_1300px_900px_at_0%_100%,#08a4f8_0%,#0a84e6_35%,#0060c4_70%,#004ba4_100%)] text-[12px] leading-4 text-black [font-family:'Noto_Sans_CJK_JP',sans-serif]">
    <Gradients />
    <i className="absolute top-[411px] left-[5px] h-[9px] w-px bg-white" />
    <span className="absolute top-[498px] left-[2px] text-white">x</span>
    <MainWindow />
    <RulesWindow />
    <ImageWindow />
    <div className="[font-feature-settings:'palt']">
      <VariablesWindow />
      <FlowWindow />
      <DataWindow />
      <LogWindow />
    </div>
  </main>
);

export default App;
